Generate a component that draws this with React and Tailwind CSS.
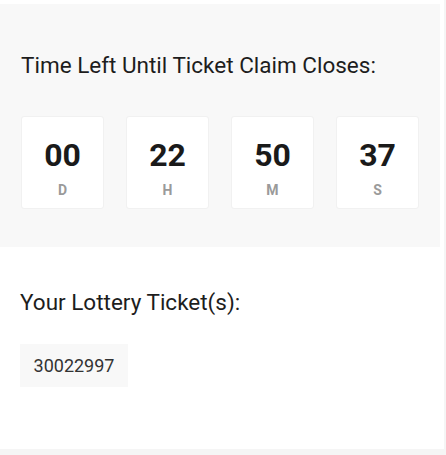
import React from "react";

const countdown = [
  { value: "00", label: "D" },
  { value: "22", label: "H" },
  { value: "50", label: "M" },
  { value: "37", label: "S" },
];

const tickets = ["30022997"];

const App = () => {
  return (
    <div
      className="min-h-[455px] w-[446px] bg-[#f5f5f5]"
      style={{ fontFamily: "Roboto, 'Liberation Sans', sans-serif" }}
    >
      <div className="w-[444px] bg-white pt-[4px] pr-[4px] pb-[62px]">
        {/* Countdown */}
        <div className="bg-[#f8f8f8] px-[21px] pt-[46px] pb-[38px]">
          <h2 className="text-[22.5px] leading-[30px] text-[#1d1d1d]">
            Time Left Until Ticket Claim Closes:
          </h2>
          <div className="mt-[36px] flex gap-[22px]">
            {countdown.map((item) => (
              <div
                key={item.label}
                className="flex h-[93px] w-[83px] flex-col items-center rounded-[3px] border border-[#f1f1f1] bg-white pt-[20px]"
              >
                <span className="text-[32px] font-bold leading-[36px] text-[#1a1a1a]">
                  {item.value}
                </span>
                <span className="mt-[8px] text-[14px] font-bold leading-[18px] text-[#9a9a9a]">
                  {item.label}
                </span>
              </div>
            ))}
          </div>
        </div>

        {/* Tickets */}
        <div className="px-[20px] pt-[40px]">
          <h2 className="text-[22.5px] leading-[30px] text-[#1d1d1d]">Your Lottery Ticket(s):</h2>
          <div className="mt-[27px] flex flex-wrap gap-2">
            {tickets.map((t) => (
              <span
                key={t}
                className="flex h-[43px] w-[108px] items-center justify-center bg-[#f8f8f8] text-[18px] text-[#333]"
              >
                {t}
              </span>
            ))}
          </div>
        </div>
      </div>
    </div>
  );
};

export default App;
